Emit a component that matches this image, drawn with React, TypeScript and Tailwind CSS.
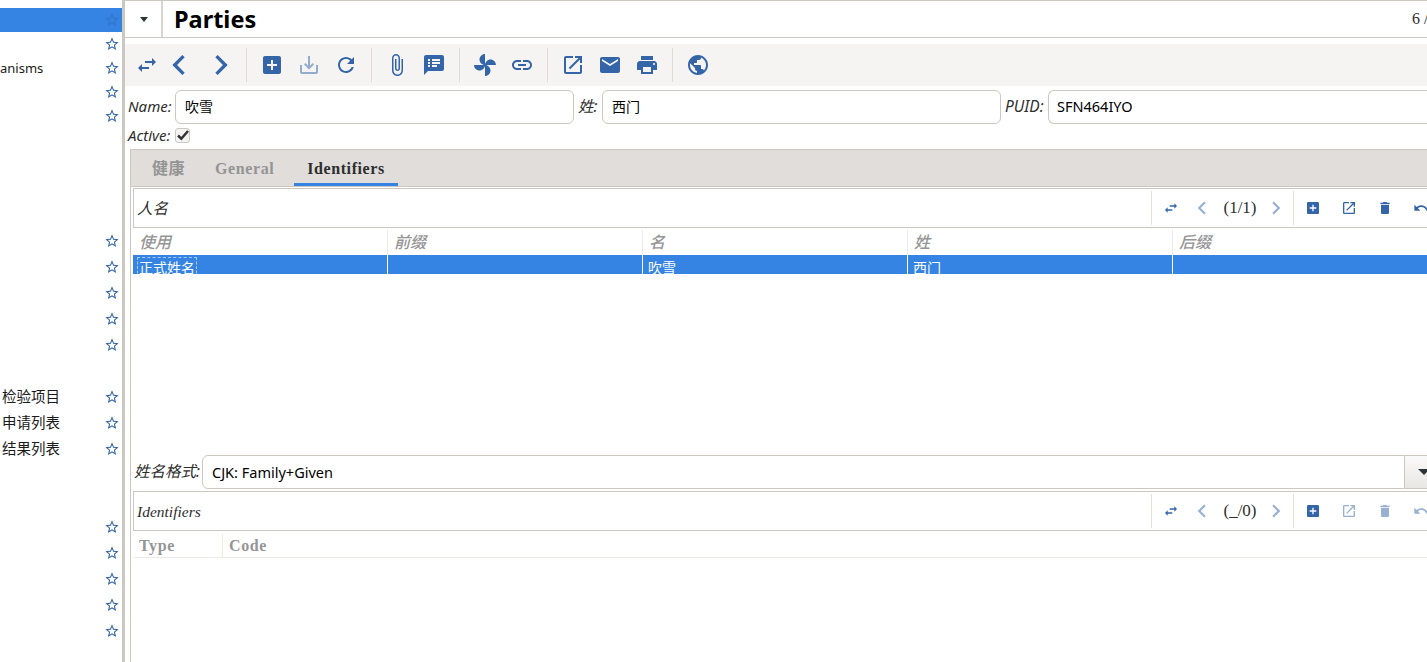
const P = {
  swap: "M6.99 11L3 15l3.99 4v-3H14v-2H6.99v-3zM21 9l-3.99-4v3H10v2h7.01v3L21 9z",
  left: "M15.41 7.41L14 6l-6 6 6 6 1.41-1.41L10.83 12z",
  right: "M10 6L8.59 7.41 13.17 12l-4.58 4.59L10 18l6-6z",
  add: "M19 3H5c-1.11 0-2 .9-2 2v14c0 1.1.89 2 2 2h14c1.1 0 2-.9 2-2V5c0-1.1-.9-2-2-2zm-2 10h-4v4h-2v-4H7v-2h4V7h2v4h4v2z",
  save: "M19 12v7H5v-7H3v7c0 1.1.9 2 2 2h14c1.1 0 2-.9 2-2v-7h-2zm-6 .67l2.59-2.58L17 11.5l-5 5-5-5 1.41-1.41L11 12.67V3h2z",
  refresh: "M17.65 6.35C16.2 4.9 14.21 4 12 4c-4.42 0-7.99 3.58-7.99 8s3.57 8 7.99 8c3.73 0 6.84-2.55 7.73-6h-2.08c-.82 2.33-3.04 4-5.65 4-3.31 0-6-2.69-6-6s2.69-6 6-6c1.66 0 3.14.69 4.22 1.78L13 11h7V4l-2.35 2.35z",
  clip: "M16.5 6v11.5c0 2.21-1.79 4-4 4s-4-1.79-4-4V5c0-1.38 1.12-2.5 2.5-2.5s2.5 1.12 2.5 2.5v10.5c0 .55-.45 1-1 1s-1-.45-1-1V6H10v9.5c0 1.38 1.12 2.5 2.5 2.5s2.5-1.12 2.5-2.5V5c0-2.21-1.79-4-4-4S7 2.79 7 5v12.5c0 3.04 2.46 5.5 5.5 5.5s5.5-2.46 5.5-5.5V6h-1.5z",
  notes: "M20 2H4c-1.1 0-1.99.9-1.99 2L2 22l4-4h14c1.1 0 2-.9 2-2V4c0-1.1-.9-2-2-2zM8 14H6v-2h2v2zm0-3H6V9h2v2zm0-3H6V6h2v2zm7 6h-5v-2h5v2zm3-3h-8V9h8v2zm0-3h-8V6h8v2z",
  fan: "M12 12c0-3 2.5-5.5 5.5-5.5S23 9 23 12H12zm0 0c0 3-2.5 5.5-5.5 5.5S1 15 1 12h11zm0 0c-3 0-5.5-2.5-5.5-5.5S9 1 12 1v11zm0 0c3 0 5.5 2.5 5.5 5.5S15 23 12 23V12z",
  link: "M3.9 12c0-1.71 1.39-3.1 3.1-3.1h4V7H7c-2.76 0-5 2.24-5 5s2.24 5 5 5h4v-1.9H7c-1.71 0-3.1-1.39-3.1-3.1zM8 13h8v-2H8v2zm9-6h-4v1.9h4c1.71 0 3.1 1.39 3.1 3.1s-1.39 3.1-3.1 3.1h-4V17h4c2.76 0 5-2.24 5-5s-2.24-5-5-5z",
  open: "M19 19H5V5h7V3H5c-1.11 0-2 .9-2 2v14c0 1.1.89 2 2 2h14c1.1 0 2-.9 2-2v-7h-2v7zM14 3v2h3.59l-9.83 9.83 1.41 1.41L19 6.41V10h2V3h-7z",
  mail: "M20 4H4c-1.1 0-1.99.9-1.99 2L2 18c0 1.1.9 2 2 2h16c1.1 0 2-.9 2-2V6c0-1.1-.9-2-2-2zm0 4l-8 5-8-5V6l8 5 8-5v2z",
  print: "M19 8H5c-1.66 0-3 1.34-3 3v6h4v4h12v-4h4v-6c0-1.66-1.34-3-3-3zm-3 11H8v-5h8v5zm3-7c-.55 0-1-.45-1-1s.45-1 1-1 1 .45 1 1-.45 1-1 1zm-1-9H6v4h12V3z",
  globe: "M12 2C6.48 2 2 6.48 2 12s4.48 10 10 10 10-4.48 10-10S17.52 2 12 2zm-1 17.93c-3.95-.49-7-3.85-7-7.93 0-.62.08-1.21.21-1.79L9 15v1c0 1.1.9 2 2 2v1.93zm6.9-2.54c-.26-.81-1-1.39-1.9-1.39h-1v-3c0-.55-.45-1-1-1H8v-2h2c.55 0 1-.45 1-1V7h2c1.1 0 2-.9 2-2v-.41c2.93 1.19 5 4.06 5 7.41 0 2.08-.8 3.97-2.1 5.39z",
  trash: "M6 19c0 1.1.9 2 2 2h8c1.1 0 2-.9 2-2V7H6v12zM19 4h-3.5l-1-1h-5l-1 1H5v2h14V4z",
  undo: "M12.5 8c-2.65 0-5.05.99-6.9 2.6L2 7v9h9l-3.62-3.62c1.39-1.16 3.16-1.88 5.12-1.88 3.54 0 6.55 2.31 7.6 5.5l2.37-.78C21.08 11.03 17.15 8 12.5 8z",
  star: "M22 9.24l-7.19-.62L12 2 9.19 8.63 2 9.24l5.46 4.73L5.82 21 12 17.27 18.18 21l-1.63-7.03L22 9.24zM12 15.4l-3.76 2.27 1-4.28-3.32-2.88 4.38-.38L12 6.1l1.71 4.04 4.38.38-3.32 2.88 1 4.28L12 15.4z",
};

function Icon({ d, size = 24, faded = false }: { d: string; size?: number; faded?: boolean }) {
  return (
    <svg width={size} height={size} viewBox="0 0 24 24" className={faded ? "shrink-0 fill-[#3465a8] opacity-50" : "shrink-0 fill-[#3465a8]"}>
      <path d={d} />
    </svg>
  );
}

const SANS = "font-['Noto_Sans','Noto_Sans_CJK_SC',sans-serif]";
const SERIF = "font-['Liberation_Serif','Noto_Sans_CJK_SC',serif]";

function SideRow({ text, h, sel = false, cjk = false }: { text?: string; h: string; sel?: boolean; cjk?: boolean }) {
  return (
    <div className={`${h} flex items-center justify-between pr-[2px] text-[#1a1a1a] ${sel ? "bg-[#3584e4]" : ""}`}>
      {cjk ? (
        <span className="mb-[1px] pl-[2px] text-[14.5px]">{text}</span>
      ) : (
        <span className="mt-[1px] text-[13px]">{text}</span>
      )}
      <Icon d={P.star} size={16} faded={sel} />
    </div>
  );
}

function Sep() {
  return <div className="h-[34px] w-px bg-[#dedbd8]" />;
}

function ToolIcon({ d, faded, size, className = "" }: { d: string; faded?: boolean; size?: number; className?: string }) {
  return (
    <div className={`flex h-6 w-6 items-center justify-center ${className}`}>
      <Icon d={d} faded={faded} size={size} />
    </div>
  );
}

function SubBar({ title, count, faded }: { title: string; count: string; faded: boolean }) {
  return (
    <div className="flex h-10 w-[1338px] shrink-0 items-center border border-[#ccc7c0] bg-white">
      <span className={`grow pl-[3px] pt-[1px] text-[15.5px] italic text-[#2e2e2e] ${SERIF}`}>{title}</span>
      <div className="flex h-[34px] w-[143px] items-center border-x border-[#e3e0dd]">
        <div className="flex w-[36px] justify-center pl-[2px]"><Icon d={P.swap} size={16} /></div>
        <div className="flex w-[28px] justify-center"><Icon d={P.left} size={26} faded /></div>
        <span className={`w-[45px] pl-[3px] text-center text-[17px] text-[#2e2e2e] ${SERIF}`}>{count}</span>
        <div className="flex w-[28px] justify-center pl-[1px]"><Icon d={P.right} size={26} faded /></div>
      </div>
      <div className="flex w-[176px] items-center pl-[1px]">
        <div className="flex w-9 justify-center"><Icon d={P.add} size={16} /></div>
        <div className="flex w-9 justify-center"><Icon d={P.open} size={16} faded={faded} /></div>
        <div className="flex w-9 justify-center"><Icon d={P.trash} size={16} faded={faded} /></div>
        <div className="flex w-9 justify-center"><Icon d={P.undo} size={16} faded={faded} /></div>
      </div>
    </div>
  );
}

function HeadCell({ w, text, bold }: { w: string; text: string; bold?: boolean }) {
  return (
    <div className={`${w} shrink-0 border-r border-[#ece9e7] pl-[6px] text-[16px] text-[#959595] ${bold ? `font-bold tracking-[0.6px] ${SERIF}` : `italic font-medium ${SANS}`}`}>
      {text}
    </div>
  );
}

function RowCell({ w, text, outlined }: { w: string; text?: string; outlined?: boolean }) {
  return (
    <div className={`${w} h-[19px] shrink-0 overflow-hidden border-r border-white pl-[4px] text-[14px] leading-[26px] text-white`}>
      {text && <span className={outlined ? "border border-dashed border-[#a8c8f0] px-[1px]" : "pl-[1px]"}>{text}</span>}
    </div>
  );
}

export default function App() {
  return (
    <div className={`flex h-[662px] w-[1427px] overflow-hidden bg-white text-[14px] ${SANS}`}>
      <aside className="w-[125px] shrink-0 border-r-[3px] border-[#ccc7c0] pt-2">
        <SideRow h="h-6" sel />
        <SideRow h="h-6" />
        <SideRow h="h-6" text="anisms" />
        <SideRow h="h-6" />
        <SideRow h="h-6" />
        <div className="h-[100px]" />
        <SideRow h="h-[26px]" />
        <SideRow h="h-[26px]" />
        <SideRow h="h-[26px]" />
        <SideRow h="h-[26px]" />
        <SideRow h="h-[26px]" />
        <div className="h-[26px]" />
        <SideRow h="h-[26px]" text="检验项目" cjk />
        <SideRow h="h-[26px]" text="申请列表" cjk />
        <SideRow h="h-[26px]" text="结果列表" cjk />
        <div className="h-[52px]" />
        <SideRow h="h-[26px]" />
        <SideRow h="h-[26px]" />
        <SideRow h="h-[26px]" />
        <SideRow h="h-[26px]" />
        <SideRow h="h-[26px]" />
      </aside>

      <main className="w-[1302px] shrink-0 overflow-hidden">
        <header className="flex h-[38px] items-center border-y border-[#ccc7c0]">
          <div className="flex h-full w-[38px] items-center justify-center border-r-2 border-[#d8d4d0]">
            <div className="ml-[1px] h-0 w-0 border-x-[4.5px] border-t-[5px] border-x-transparent border-t-[#2e3436]" />
          </div>
          <h1 className="grow pl-[11px] pt-[1px] text-[23.5px] font-bold leading-none text-black">Parties</h1>
          <span className={`w-[15px] overflow-hidden whitespace-nowrap text-[16px] text-[#2e2e2e] ${SERIF}`}>6 /</span>
        </header>

        <div className="mt-[6px] flex h-[42px] items-center gap-[13px] bg-[#f5f4f2] pl-[10px]">
          <ToolIcon d={P.swap} />
          <ToolIcon d={P.left} size={40} className="-ml-[5px]" />
          <ToolIcon d={P.right} size={40} className="ml-[5px]" />
          <Sep />
          <ToolIcon d={P.add} />
          <ToolIcon d={P.save} faded />
          <ToolIcon d={P.refresh} />
          <Sep />
          <ToolIcon d={P.clip} />
          <ToolIcon d={P.notes} />
          <Sep />
          <ToolIcon d={P.fan} />
          <ToolIcon d={P.link} />
          <Sep />
          <ToolIcon d={P.open} />
          <ToolIcon d={P.mail} />
          <ToolIcon d={P.print} />
          <Sep />
          <ToolIcon d={P.globe} />
        </div>

        <div className="mt-1 flex h-[34px] items-center pl-[3px] text-[#2e2e2e]">
          <label className="-mt-[1px] w-[47px] text-[15px] italic">Name:</label>
          <div className="flex h-full w-[399px] shrink-0 items-center rounded-md border border-[#ccc7c0] pb-[1px] pl-[9px] text-[14px] text-black">吹雪</div>
          <label className="-mt-[1px] ml-[4px] w-[24px] text-[15.5px] italic">姓:</label>
          <div className="flex h-full w-[399px] shrink-0 items-center rounded-md border border-[#ccc7c0] pb-[1px] pl-[9px] text-[14px] text-black">西门</div>
          <label className="-mt-[1px] ml-[4px] w-[43px] text-[15.5px] italic">PUID:</label>
          <div className="flex h-full grow items-center rounded-l-md border border-r-0 border-[#ccc7c0] pb-[1px] pl-[8px] text-[14.5px] text-black">SFN464IYO</div>
        </div>

        <div className="flex h-[22px] items-center pl-[3px] text-[#2e2e2e]">
          <label className="w-[47px] text-[15px] italic">Active:</label>
          <div className="flex h-[15px] w-[15px] items-center justify-center rounded-[3px] border border-[#ccc7c0] bg-[#f5f4f2]">
            <svg width="12" height="12" viewBox="0 0 12 12" className="shrink-0 fill-none stroke-[#2e3436] stroke-[2.5]"><path d="M1 6.5 4.3 9.7 11 2" /></svg>
          </div>
        </div>

        <section className="ml-[5px] mt-[3px] h-[513px] border-l border-t border-[#ccc7c0]">
          <div className={`flex h-[37px] items-end border-b border-[#ccc7c0] bg-[#e0dddb] text-[16px] font-bold tracking-[0.6px] ${SERIF}`}>
            <div className="flex h-full w-[84px] items-center pl-[21px] pt-[1px] text-[#949494]">健康</div>
            <div className="flex h-full w-[79px] items-center pt-[1px] text-[#949494]">General</div>
            <div className="flex h-full w-[104px] items-center justify-center border-b-[3px] border-[#3584e4] pt-[4px] text-[#2e2e2e]">Identifiers</div>
          </div>

          <div className="pl-[2px] pt-[1px]">
            <SubBar title="人名" count="(1/1)" faded={false} />
            <div className="flex h-[27px] items-center pt-[1px]">
              <HeadCell w="w-[255px]" text="使用" />
              <HeadCell w="w-[255px]" text="前缀" />
              <HeadCell w="w-[265px]" text="名" />
              <HeadCell w="w-[265px]" text="姓" />
              <HeadCell w="w-[260px]" text="后缀" />
            </div>
            <div className="flex h-[19px] bg-[#3584e4]">
              <RowCell w="w-[255px]" text="正式姓名" outlined />
              <RowCell w="w-[255px]" />
              <RowCell w="w-[265px]" text="吹雪" />
              <RowCell w="w-[265px]" text="西门" />
              <RowCell w="w-[260px]" />
            </div>
            <div className="h-[181px]" />

            <div className="flex h-[34px] items-center">
              <label className="w-[69px] shrink-0 pl-[1px] text-[15.5px] italic text-[#2e2e2e]">姓名格式:</label>
              <div className="flex h-full w-[1203px] shrink-0 items-center rounded-l-md border border-[#ccc7c0] pl-[9px] pt-[1px] text-[14.5px] text-black">CJK: Family+Given</div>
              <div className="flex h-full w-[40px] shrink-0 items-center border-y border-r border-[#ccc7c0] bg-linear-to-b from-[#fbfafa] to-[#e9e7e4] pl-[13px]">
                <div className="h-0 w-0 border-x-[6px] border-t-[6px] border-x-transparent border-t-[#2e3436]" />
              </div>
            </div>

            <div className="mt-[2px]">
              <SubBar title="Identifiers" count="(_/0)" faded />
            </div>
            <div className="flex h-[27px] items-center border-b border-[#ece9e7] pt-[3px]">
              <HeadCell w="w-[90px]" text="Type" bold />
              <div className={`pl-[6px] text-[16px] font-bold tracking-[0.6px] text-[#959595] ${SERIF}`}>Code</div>
            </div>
          </div>
        </section>
      </main>
    </div>
  );
}
